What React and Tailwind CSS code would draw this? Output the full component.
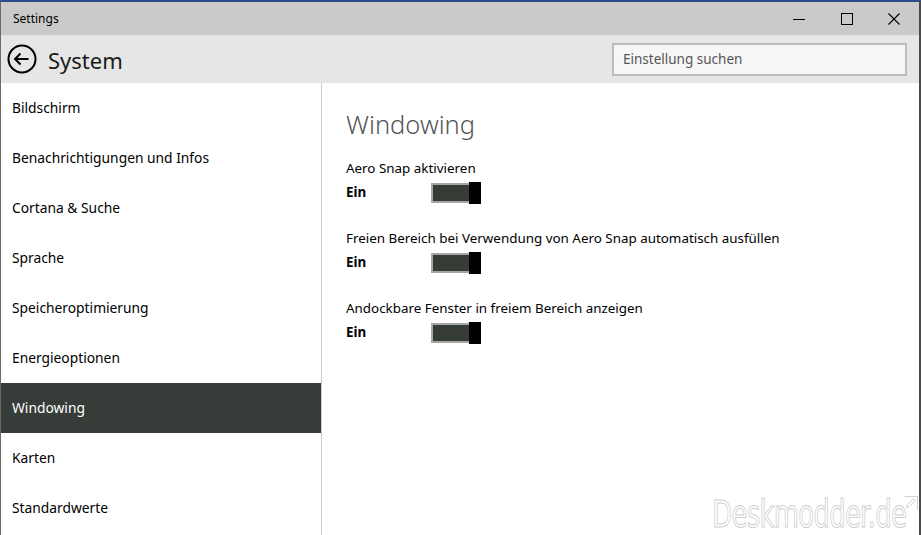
const NAV_ITEMS = [
  "Bildschirm",
  "Benachrichtigungen und Infos",
  "Cortana & Suche",
  "Sprache",
  "Speicheroptimierung",
  "Energieoptionen",
  "Windowing",
  "Karten",
  "Standardwerte",
];

const SETTINGS = [
  "Aero Snap aktivieren",
  "Freien Bereich bei Verwendung von Aero Snap automatisch ausfüllen",
  "Andockbare Fenster in freiem Bereich anzeigen",
];

const FONT = "font-['Noto_Sans','Open_Sans',sans-serif]";

function BackIcon() {
  return (
    <svg viewBox="0 0 30 30" className="h-[30px] w-[30px]" fill="none" stroke="#000" strokeWidth="2">
      <circle cx="15" cy="15" r="13.5" />
      <path d="M21.5 15H8.5M13.5 9.5L8 15l5.5 5.5" />
    </svg>
  );
}

function Toggle() {
  return (
    <div className="flex h-[22px] items-center">
      <div className="h-[20px] w-[40px] border-2 border-[#a6a6a6] bg-[#353c36] box-border" />
      <div className="-ml-[2px] h-[22px] w-[12px] bg-black" />
    </div>
  );
}

export default function App() {
  return (
    <div className={`flex h-[535px] w-[921px] flex-col overflow-hidden border-t-2 border-t-[#2b4c8c] border-l border-l-[#6b6b6b] border-r-2 border-r-[#4a4a4a] bg-white ${FONT}`}>
      {/* title bar */}
      <div className="flex h-[33px] shrink-0 items-center justify-between bg-[#cacaca]">
        <span className="pl-[12px] text-[12px] text-black">Settings</span>
        <div className="flex h-full">
          <div className="flex w-[48px] items-center justify-center">
            <svg viewBox="0 0 12 12" className="h-3 w-3" stroke="#000" strokeWidth="1">
              <path d="M0 6.5h12" />
            </svg>
          </div>
          <div className="flex w-[48px] items-center justify-center">
            <svg viewBox="0 0 12 12" className="h-3 w-3" fill="none" stroke="#000" strokeWidth="1">
              <rect x="0.5" y="0.5" width="11" height="11" />
            </svg>
          </div>
          <div className="flex w-[48px] items-center justify-center pr-[2px]">
            <svg viewBox="0 0 12 12" className="h-3 w-3" stroke="#000" strokeWidth="1.1">
              <path d="M0.5 0.5l11 11M11.5 0.5l-11 11" />
            </svg>
          </div>
        </div>
      </div>

      {/* header */}
      <div className="flex h-[48px] shrink-0 items-center justify-between bg-[#e6e6e6] pl-[6px] pr-[12px]">
        <div className="flex items-center gap-[11px]">
          <BackIcon />
          <span className="pt-[2px] text-[22px] leading-none text-[#1a1a1a]">System</span>
        </div>
        <div className="flex h-[33px] w-[295px] items-center border-2 border-[#bcbcbc] bg-[#f6f6f6] px-[9px] text-[13.5px] text-[#555]">
          Einstellung suchen
        </div>
      </div>

      {/* body */}
      <div className="flex min-h-0 flex-1">
        <nav className="flex w-[321px] shrink-0 flex-col border-r border-[#cccccc]">
          {NAV_ITEMS.map((item) => (
            <div
              key={item}
              className={`flex h-[50px] shrink-0 items-center pl-[11px] text-[13.8px] ${
                item === "Windowing" ? "bg-[#363c37] text-white" : "text-black"
              }`}
            >
              {item}
            </div>
          ))}
        </nav>

        <main className="relative flex-1 pl-[24px] pt-[29px]">
          <h1 className="text-[25.5px] font-light leading-none text-[#555]">Windowing</h1>
          <div className="mt-[19px] flex flex-col gap-[23px]">
            {SETTINGS.map((label) => (
              <div key={label} className="flex flex-col">
                <span className="text-[13.4px] leading-[22px] text-black">{label}</span>
                <div className="mt-[3px] flex items-center">
                  <span className="w-[85px] text-[13.4px] font-bold text-black">Ein</span>
                  <Toggle />
                </div>
              </div>
            ))}
          </div>

          <div className="absolute bottom-[2px] right-[1px] flex items-start">
            <span className="inline-block origin-right scale-x-[0.7] font-['DejaVu_Sans',sans-serif] text-[37px] leading-none tracking-[-1px] text-transparent [-webkit-text-stroke:1px_#cfcfcf]">
              Deskmodder.de
            </span>
            <svg viewBox="0 0 14 14" className="-ml-[2px] h-[14px] w-[14px]" fill="none" stroke="#cfcfcf" strokeWidth="1">
              <path d="M0.5 0.5h13v13" />
              <path d="M2.5 11.5l1-3 6-6 2 2-6 6z" />
            </svg>
          </div>
        </main>
      </div>
    </div>
  );
}
